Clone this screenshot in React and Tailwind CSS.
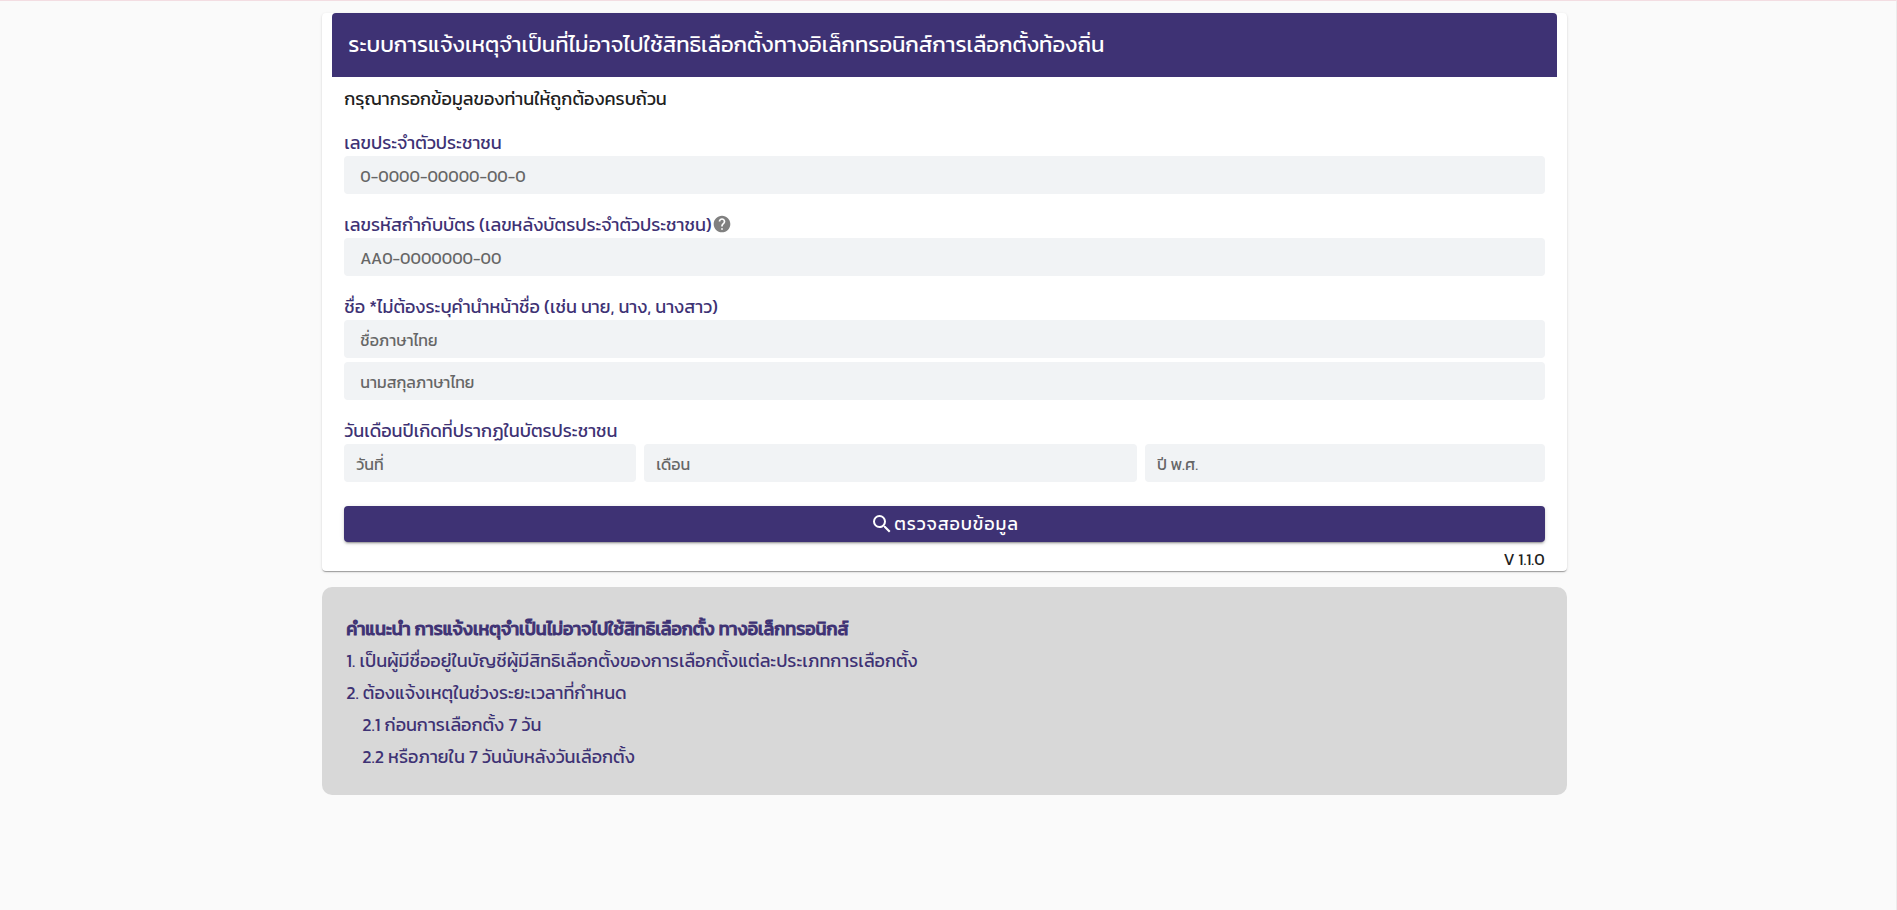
import { MdHelp, MdSearch } from 'react-icons/md'
import clsx from 'clsx'

const birthFields = [
  { id: 'day', placeholder: 'วันที่' },
  { id: 'month', placeholder: 'เดือน' },
  { id: 'year', placeholder: 'ปี พ.ศ.' },
]

function FieldLabel({ className, ...props }) {
  return <label className={clsx('flex items-start pb-0.5 text-lg leading-[22px] text-[#3e3274]', className)} {...props} />
}

function TextField({ className, ...props }) {
  return (
    <input
      type="text"
      className={clsx(
        'block w-full min-w-0 h-[38px] rounded bg-[#f1f3f5] pt-0.5 text-gray-800 placeholder:text-[#666666] outline-none',
        className
      )}
      {...props}
    />
  )
}

export default function App() {
  return (
    <div className="min-h-screen bg-[#fafafa] border-t border-t-[#f3dde2] border-r border-r-[#ececec] pt-3 pr-[7px] font-['Kanit','Noto_Sans_Thai','Noto_Sans',sans-serif] text-base text-[#212121]">
      <main className="w-[calc(66.667%-15px)] mx-auto">
        <section className="rounded bg-white px-2.5 shadow-[0_2px_1px_-1px_rgba(0,0,0,0.2),0_1px_1px_0_rgba(0,0,0,0.14),0_1px_3px_0_rgba(0,0,0,0.12)]">
          <header className="flex h-16 items-center rounded-t bg-[#3e3274] px-4">
            <h1 className="text-[22px] leading-8 text-white">
              ระบบการแจ้งเหตุจำเป็นที่ไม่อาจไปใช้สิทธิเลือกตั้งทางอิเล็กทรอนิกส์การเลือกตั้งท้องถิ่น
            </h1>
          </header>

          <form className="px-3 pt-[11px]" onSubmit={(e) => e.preventDefault()}>
            <p className="mb-[22px] text-lg leading-[22px]">กรุณากรอกข้อมูลของท่านให้ถูกต้องครบถ้วน</p>

            <div className="mb-5">
              <FieldLabel htmlFor="citizen">เลขประจำตัวประชาชน</FieldLabel>
              <TextField id="citizen" placeholder="0-0000-00000-00-0" className="px-4" />
            </div>

            <div className="mb-5">
              <FieldLabel htmlFor="laser">
                เลขรหัสกำกับบัตร (เลขหลังบัตรประจำตัวประชาชน)
                <MdHelp className="h-5 w-5 text-[#808080]" />
              </FieldLabel>
              <TextField id="laser" placeholder="AA0-0000000-00" className="px-4" />
            </div>

            <div className="mb-5">
              <FieldLabel htmlFor="firstname">ชื่อ *ไม่ต้องระบุคำนำหน้าชื่อ (เช่น นาย, นาง, นางสาว)</FieldLabel>
              <TextField id="firstname" placeholder="ชื่อภาษาไทย" className="px-4" />
              <TextField aria-label="นามสกุล" placeholder="นามสกุลภาษาไทย" className="mt-1 px-4" />
            </div>

            <div className="mb-6">
              <FieldLabel htmlFor="day">วันเดือนปีเกิดที่ปรากฏในบัตรประชาชน</FieldLabel>
              <div className="grid grid-cols-[292fr_493fr_400fr] gap-2">
                {birthFields.map((f) => (
                  <TextField key={f.id} id={f.id} aria-label={f.placeholder} placeholder={f.placeholder} className="px-3" />
                ))}
              </div>
            </div>

            <button
              type="submit"
              className="flex h-9 w-full items-center justify-center rounded bg-[#3e3274] text-lg tracking-wider text-white shadow-[0_3px_1px_-2px_rgba(0,0,0,0.2),0_2px_2px_0_rgba(0,0,0,0.14),0_1px_5px_0_rgba(0,0,0,0.12)]"
            >
              <MdSearch className="h-6 w-6" />
              ตรวจสอบข้อมูล
            </button>
            <p className="pt-[5px] text-right leading-6">V 1.1.0</p>
          </form>
        </section>

        <section className="mt-4 rounded-[10px] bg-[#d8d8d8] px-6 pt-[26px] pb-[22px] text-lg leading-8 text-[#3e3274]">
          <h2 className="[-webkit-text-stroke:1px_#3e3274]">คำแนะนำ การแจ้งเหตุจำเป็นไม่อาจไปใช้สิทธิเลือกตั้ง ทางอิเล็กทรอนิกส์</h2>
          <p>1. เป็นผู้มีชื่ออยู่ในบัญชีผู้มีสิทธิเลือกตั้งของการเลือกตั้งแต่ละประเภทการเลือกตั้ง</p>
          <p>2. ต้องแจ้งเหตุในช่วงระยะเวลาที่กำหนด</p>
          <p className="pl-4">2.1 ก่อนการเลือกตั้ง 7 วัน</p>
          <p className="pl-4">2.2 หรือภายใน 7 วันนับหลังวันเลือกตั้ง</p>
        </section>
      </main>
    </div>
  )
}
